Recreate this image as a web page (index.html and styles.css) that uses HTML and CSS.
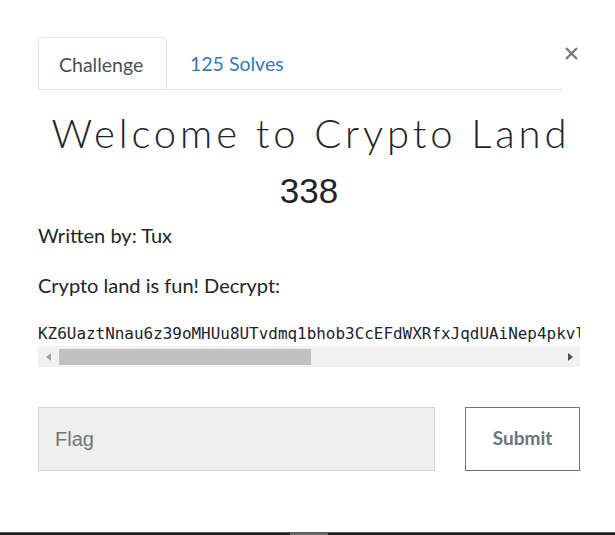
FILE: index.html
```html
<!DOCTYPE html>
<html>
<head>
<meta charset="utf-8">
<link rel="stylesheet" href="styles.css">
</head>
<body>
<div class="modal">
  <div class="header">
    <div class="tabs">
      <div class="tab active">Challenge</div>
      <div class="tab link">125 Solves</div>
    </div>
    <div class="close">
      <svg width="13" height="13" viewBox="0 0 13 13"><path d="M1 1 L12 12 M12 1 L1 12" stroke="#7b7b7b" stroke-width="2.4" fill="none"/></svg>
    </div>
  </div>
  <h2 class="title">Welcome to Crypto Land</h2>
  <h3 class="points">338</h3>
  <p class="text author">Written by: Tux</p>
  <p class="text desc">Crypto land is fun! Decrypt:</p>
  <div class="code">
    <pre class="code-line">KZ6UaztNnau6z39oMHUu8UTvdmq1bhob3CcEFdWXRfxJqdUAiNep4pkvl</pre>
    <div class="hscroll">
      <span class="arrow left"></span>
      <span class="thumb"></span>
      <span class="track-rest"></span>
      <span class="arrow right"></span>
    </div>
  </div>
  <div class="form">
    <div class="input">Flag</div>
    <div class="btn">Submit</div>
  </div>
</div>
<div class="bottom-bar"><span class="bar-seg"></span></div>
</body>
</html>
```
FILE: styles.css
```css
html, body { margin: 0; padding: 0; height: 100%; }
body {
  background: #fff;
  font-family: "Lato", "Liberation Sans", sans-serif;
  color: #212529;
  display: flex;
  flex-direction: column;
  min-height: 535px;
}
.modal {
  padding: 37px 0 0 38px;
  width: 542px;
}
.header {
  display: flex;
  align-items: flex-start;
}
.tabs {
  display: flex;
  width: 525px;
  border-bottom: 1px solid #dee2e6;
  height: 52px;
}
.tab {
  font-size: 19.5px;
  line-height: 53px;
  padding: 0 20px;
  height: 52px;
  box-sizing: border-box;
}
.tab.active {
  border: 1px solid #dee2e6;
  border-bottom: 1px solid #fff;
  border-radius: 5px 5px 0 0;
  color: #495057;
  background: #fff;
  width: 129px;
  line-height: 51px;
  padding-top: 1px;
}
.tab.link {
  color: #3479b7;
  padding-left: 23px;
}
.close {
  margin-left: 2px;
  margin-top: 10px;
  width: 13px;
  height: 13px;
}
.close svg { display: block; }
.title {
  margin: 19px 0 0;
  font-weight: 300;
  font-size: 40px;
  line-height: 48px;
  text-align: center;
  letter-spacing: 3.9px;
  text-indent: 3.9px;
  color: #212529;
}
.points {
  margin: 14px 0 0;
  font-family: "Liberation Sans", Arial, sans-serif;
  font-weight: 400;
  font-size: 35px;
  line-height: 40px;
  text-align: center;
  color: #212529;
}
.text {
  margin: 0;
  font-size: 20px;
  line-height: 24px;
}
.author { margin-top: 12px; }
.desc { margin-top: 26px; }
.code { margin-top: 25px; }
.code-line {
  margin: 0;
  font-family: "DejaVu Sans Mono", "Liberation Mono", monospace;
  font-size: 15.95px;
  line-height: 24px;
  height: 24px;
  overflow: hidden;
  white-space: pre;
  color: #212529;
}
.hscroll {
  display: flex;
  align-items: center;
  height: 21px;
  background: #f1f1f1;
}
.arrow {
  width: 0; height: 0;
  border-top: 4px solid transparent;
  border-bottom: 4px solid transparent;
}
.arrow.left {
  border-right: 5px solid #a3a3a3;
  margin-left: 8px;
  margin-right: 8px;
}
.arrow.right {
  border-left: 5px solid #505050;
  margin-left: 8px;
  margin-right: 7px;
}
.thumb {
  width: 252px;
  height: 16px;
  background: #c1c1c1;
}
.track-rest { flex: 1; }
.form {
  display: flex;
  margin-top: 40px;
}
.input {
  width: 397px;
  height: 64px;
  box-sizing: border-box;
  border: 1px solid #ced4da;
  background: #efefef;
  font-family: "Liberation Sans", Arial, sans-serif;
  font-size: 20px;
  line-height: 62px;
  padding-left: 16px;
  color: #757575;
}
.btn {
  margin-left: 30px;
  width: 115px;
  height: 64px;
  box-sizing: border-box;
  border: 1px solid #6c757d;
  color: #6c757d;
  font-weight: 700;
  font-size: 19px;
  line-height: 60px;
  text-align: center;
}
.bottom-bar {
  margin-top: auto;
  height: 3px;
  background: #1c1c1c;
  border-top: 1px solid #5a5a5a;
  box-sizing: border-box;
  display: flex;
}
.bar-seg {
  margin-left: 290px;
  width: 38px;
  background: #6a6a6a;
}
```
